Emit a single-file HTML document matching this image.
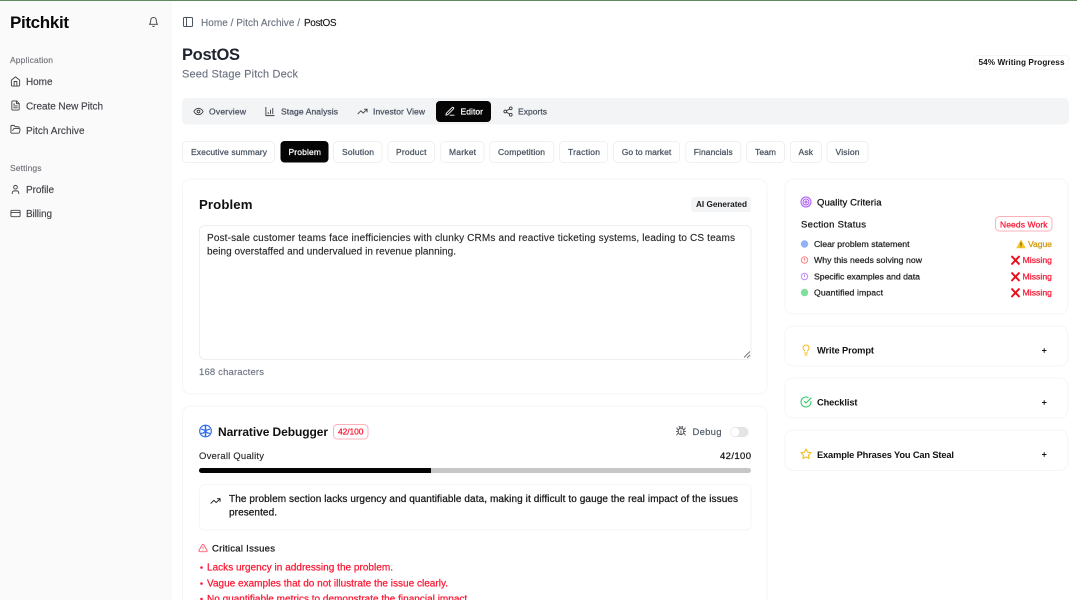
<!DOCTYPE html>
<html lang="en">
<head>
<meta charset="utf-8">
<title>PostOS - Pitchkit</title>
<style>
html,body{margin:0;padding:0;background:#fff;width:1077px;height:600px;overflow:hidden}
svg.page{display:block;filter:blur(.28px)}
text{font-family:"Liberation Sans",sans-serif;white-space:pre;fill:currentColor;stroke:currentColor;stroke-width:.13}
text.m{stroke-width:.26}
text.b{font-weight:700;stroke-width:0}
.i{fill:none;stroke-linecap:round;stroke-linejoin:round;stroke-width:2}
</style>
</head>
<body>
<svg class="page" xmlns="http://www.w3.org/2000/svg" width="1077" height="600" viewBox="0 0 1077 600">
<rect width="1077" height="600" fill="#fff"/>
<!-- sidebar -->
<rect x="0" y="0" width="172" height="600" fill="#fafafa"/>
<rect x="0" y="0" width="1077" height="1" fill="#5b8b5f"/>
<text x="10" y="28" font-size="17" class="b" color="#09090b" textLength="59">Pitchkit</text>
<svg x="148" y="16" width="11" height="12" viewBox="0 0 24 24" class="i" stroke="#3f3f46"><path d="M6 8a6 6 0 0 1 12 0c0 7 3 9 3 9H3s3-2 3-9"/><path d="M10.300 21a1.940 1.940 0 0 0 3.400 0"/></svg>

<text x="10" y="63" font-size="8.500" color="#71717a" textLength="43">Application</text>
<svg x="10" y="76" width="11" height="11" viewBox="0 0 24 24" class="i" stroke="#3f3f46"><path d="m3 9 9-7 9 7v11a2 2 0 0 1-2 2H5a2 2 0 0 1-2-2z"/><path d="M9 22V12h6v10"/></svg>
<text x="26" y="85" font-size="10" color="#3f3f46" textLength="26.500">Home</text>
<svg x="10" y="100" width="11" height="11" viewBox="0 0 24 24" class="i" stroke="#3f3f46"><path d="M14.500 2H6a2 2 0 0 0-2 2v16a2 2 0 0 0 2 2h12a2 2 0 0 0 2-2V7.500L14.500 2z"/><path d="M14 2v6h6"/><path d="M16 13H8"/><path d="M16 17H8"/><path d="M10 9H8"/></svg>
<text x="26" y="109.500" font-size="10" color="#3f3f46" textLength="77">Create New Pitch</text>
<svg x="10" y="124" width="11" height="11" viewBox="0 0 24 24" class="i" stroke="#3f3f46"><path d="m6 14 1.450-2.900A2 2 0 0 1 9.240 10H20a2 2 0 0 1 1.940 2.500l-1.550 6a2 2 0 0 1-1.940 1.500H4a2 2 0 0 1-2-2V5c0-1.100.9-2 2-2h3.930a2 2 0 0 1 1.660.9l.82 1.200a2 2 0 0 0 1.660.9H18a2 2 0 0 1 2 2v2"/></svg>
<text x="26" y="134" font-size="10" color="#3f3f46" textLength="58.500">Pitch Archive</text>

<text x="10" y="171" font-size="8.500" color="#71717a" textLength="31.500">Settings</text>
<svg x="10" y="184" width="11" height="11" viewBox="0 0 24 24" class="i" stroke="#3f3f46"><path d="M19 21v-2a4 4 0 0 0-4-4H9a4 4 0 0 0-4 4v2"/><circle cx="12" cy="7" r="4"/></svg>
<text x="26" y="193" font-size="10" color="#3f3f46" textLength="28">Profile</text>
<svg x="10" y="208" width="11" height="11" viewBox="0 0 24 24" class="i" stroke="#3f3f46"><rect x="2" y="5" width="20" height="14" rx="2"/><line x1="2" y1="10" x2="22" y2="10"/></svg>
<text x="26" y="217" font-size="10" color="#3f3f46" textLength="26">Billing</text>

<!-- breadcrumb -->
<svg x="182" y="16" width="12" height="12" viewBox="0 0 24 24" class="i" stroke="#4b5563"><rect x="3" y="3" width="18" height="18" rx="2"/><path d="M9 3v18"/></svg>
<text x="201" y="26" font-size="10" color="#6b7280" textLength="99">Home / Pitch Archive /</text>
<text x="304" y="26" font-size="10" color="#18181b" textLength="32.500">PostOS</text>

<!-- heading -->
<text x="182" y="60" font-size="16.500" class="b" color="#1f2430" textLength="58">PostOS</text>
<text x="182" y="77.500" font-size="11" color="#6b7280" textLength="116">Seed Stage Pitch Deck</text>
<rect x="974.500" y="55.500" width="94" height="14" rx="3" fill="#fff" stroke="#f7f7f7"/>
<text x="978.500" y="65" font-size="8.200" class="b" color="#18181b" textLength="86">54% Writing Progress</text>

<!-- tabs -->
<rect x="182" y="98" width="887" height="26.500" rx="5" fill="#f3f4f6"/>
<svg x="193" y="106" width="11" height="11" viewBox="0 0 24 24" class="i" stroke="#3f3f46"><path d="M2 12s3-7 10-7 10 7 10 7-3 7-10 7-10-7-10-7Z"/><circle cx="12" cy="12" r="3"/></svg>
<text x="209" y="114.500" font-size="8.500" class="m" color="#4b5563" textLength="37">Overview</text>
<svg x="264.500" y="106" width="11" height="11" viewBox="0 0 24 24" class="i" stroke="#3f3f46"><path d="M3 3v18h18"/><path d="M8 17v-3"/><path d="M13 17V9"/><path d="M18 17V5"/></svg>
<text x="281" y="114.500" font-size="8.500" class="m" color="#4b5563" textLength="57">Stage Analysis</text>
<svg x="357" y="106" width="11" height="11" viewBox="0 0 24 24" class="i" stroke="#3f3f46"><path d="m22 7-8.500 8.500-5-5L2 17"/><path d="M16 7h6v6"/></svg>
<text x="373" y="114.500" font-size="8.500" class="m" color="#4b5563" textLength="52">Investor View</text>
<rect x="436" y="101" width="55" height="21" rx="4" fill="#050505"/>
<svg x="444.500" y="106" width="11" height="11" viewBox="0 0 24 24" class="i" stroke="#fff"><path d="M12 20h9"/><path d="M16.500 3.500a2.120 2.120 0 0 1 3 3L7 19l-4 1 1-4Z"/></svg>
<text x="460.500" y="114.500" font-size="8.500" class="m" color="#fff" textLength="22.500">Editor</text>
<svg x="502.500" y="106" width="11" height="11" viewBox="0 0 24 24" class="i" stroke="#3f3f46"><circle cx="18" cy="5" r="3"/><circle cx="6" cy="12" r="3"/><circle cx="18" cy="19" r="3"/><path d="M8.590 13.510l6.830 3.980"/><path d="M15.410 6.510l-6.820 3.980"/></svg>
<text x="518" y="114.500" font-size="8.500" class="m" color="#4b5563" textLength="29">Exports</text>

<!-- section pills -->
<g fill="#fff" stroke="#f0f0f1">
<rect x="182.500" y="141.500" width="92" height="21" rx="4"/>
<rect x="333.500" y="141.500" width="48.500" height="21" rx="4"/>
<rect x="388" y="141.500" width="46.500" height="21" rx="4"/>
<rect x="440.700" y="141.500" width="43.300" height="21" rx="4"/>
<rect x="489.700" y="141.500" width="64" height="21" rx="4"/>
<rect x="559.500" y="141.500" width="48" height="21" rx="4"/>
<rect x="613.500" y="141.500" width="66" height="21" rx="4"/>
<rect x="685.800" y="141.500" width="55" height="21" rx="4"/>
<rect x="746.500" y="141.500" width="38" height="21" rx="4"/>
<rect x="790.500" y="141.500" width="31" height="21" rx="4"/>
<rect x="827" y="141.500" width="41" height="21" rx="4"/>
</g>
<rect x="280.500" y="141" width="48" height="21.500" rx="4" fill="#050505"/>
<g font-size="8.500" color="#4b5563">
<text class="m" x="191" y="155" textLength="76">Executive summary</text>
<text class="m" x="342" y="155" textLength="32">Solution</text>
<text class="m" x="396" y="155" textLength="30.500">Product</text>
<text class="m" x="449" y="155" textLength="27">Market</text>
<text class="m" x="498" y="155" textLength="47">Competition</text>
<text class="m" x="568" y="155" textLength="32">Traction</text>
<text class="m" x="621.700" y="155" textLength="49.500">Go to market</text>
<text class="m" x="693.700" y="155" textLength="39">Financials</text>
<text class="m" x="755" y="155" textLength="21">Team</text>
<text class="m" x="798.500" y="155" textLength="14.500">Ask</text>
<text class="m" x="835.500" y="155" textLength="24">Vision</text>
</g>
<text x="288.500" y="155" font-size="8.500" class="m" color="#fff" textLength="32.500">Problem</text>

<!-- problem card -->
<rect x="182.500" y="179" width="584.500" height="215" rx="8" fill="#fff" stroke="#f6f6f7"/>
<text x="199" y="209" font-size="13.200" class="b" color="#111" textLength="53.500">Problem</text>
<rect x="691" y="197" width="60" height="15" rx="3" fill="#f3f4f6"/>
<text x="696" y="207" font-size="8.200" class="b" color="#18181b" textLength="51">AI Generated</text>
<rect x="199.500" y="225.500" width="551.500" height="134" rx="5" fill="#fff" stroke="#efeff0"/>
<text x="207" y="241" font-size="10" color="#27272a" textLength="528">Post-sale customer teams face inefficiencies with clunky CRMs and reactive ticketing systems, leading to CS teams</text>
<text x="207" y="254.500" font-size="10" color="#27272a" textLength="249">being overstaffed and undervalued in revenue planning.</text>
<path d="M744 357.500l6-6M747 358l3-3" stroke="#71717a" stroke-width=".9" fill="none"/>
<text x="199" y="375" font-size="9.500" color="#6b7280" textLength="65">168 characters</text>

<!-- debugger card -->
<rect x="182.500" y="406" width="584.500" height="210" rx="8" fill="#fff" stroke="#f6f6f7"/>
<svg x="198.500" y="424" width="14" height="14" viewBox="0 0 24 24" class="i" stroke="#2f6bed"><circle cx="12" cy="12" r="10"/><path d="M12 3v18" stroke-width="2.600"/><path d="M5 9c2 0 4 1 7 3 3-2 5-3 7-3"/><path d="M5 16c3 0 5-1 7-4 2 3 4 4 7 4"/></svg>
<text x="218" y="436" font-size="12" class="b" color="#111" textLength="110">Narrative Debugger</text>
<rect x="333.500" y="424.500" width="34.500" height="14.500" rx="4" fill="#fff" stroke="#fcb0b8"/>
<text x="338" y="434.500" font-size="8.500" class="m" color="#fb1a36" textLength="25.500">42/100</text>
<svg x="675.500" y="425.500" width="11" height="11" viewBox="0 0 24 24" class="i" stroke="#52525b"><path d="m8 2 1.880 1.880"/><path d="M14.120 3.880 16 2"/><path d="M9 7.130v-1a3 3 0 1 1 6 0v1"/><path d="M12 20c-3.300 0-6-2.700-6-6v-3a4 4 0 0 1 4-4h4a4 4 0 0 1 4 4v3c0 3.300-2.700 6-6 6"/><path d="M12 20v-9"/><path d="M6.530 9C4.600 8.800 3 7.100 3 5"/><path d="M6 13H2"/><path d="M3 21c0-2.100 1.700-3.900 3.800-4"/><path d="M20.970 5c0 2.100-1.600 3.800-3.500 4"/><path d="M22 13h-4"/><path d="M17.200 17c2.100.1 3.800 1.900 3.800 4"/></svg>
<text x="692.500" y="435" font-size="9.500" color="#4b5563" textLength="29">Debug</text>
<rect x="730" y="427" width="18.500" height="10" rx="5" fill="#e4e4e7"/>
<circle cx="735" cy="432" r="4.300" fill="#fff"/>
<text x="199" y="459" font-size="9.500" color="#27272a" textLength="65">Overall Quality</text>
<text x="720" y="459" font-size="9.500" class="m" color="#18181b" textLength="31">42/100</text>
<rect x="199" y="468" width="552" height="5" rx="2.500" fill="#c6c6c6"/>
<path d="M201.500 468H431v5H201.500a2.500 2.500 0 0 1 0-5z" fill="#050505"/>
<rect x="199.500" y="484.500" width="551.500" height="45.500" rx="5" fill="#fff" stroke="#f6f6f7"/>
<svg x="210" y="495.500" width="11" height="11" viewBox="0 0 24 24" class="i" stroke="#18181b"><path d="m22 7-8.500 8.500-5-5L2 17"/><path d="M16 7h6v6"/></svg>
<text x="229" y="502" font-size="10" class="m" color="#18181b" textLength="509">The problem section lacks urgency and quantifiable data, making it difficult to gauge the real impact of the issues</text>
<text x="229" y="515.500" font-size="10" class="m" color="#18181b" textLength="48">presented.</text>
<svg x="198" y="543" width="10" height="10" viewBox="0 0 24 24" class="i" stroke="#fb4a5e"><path d="m21.730 18-8-14a2 2 0 0 0-3.480 0l-8 14A2 2 0 0 0 4 21h16a2 2 0 0 0 1.730-3Z"/><path d="M12 9v4"/><path d="M12 17h.01"/></svg>
<text x="212" y="551.500" font-size="9.500" class="m" color="#18181b" textLength="63">Critical Issues</text>
<g fill="#fb1a36">
<circle cx="201.500" cy="567.500" r="1.300"/><circle cx="201.500" cy="583.500" r="1.300"/><circle cx="201.500" cy="599" r="1.300"/>
</g>
<g font-size="10" color="#fb1a36">
<text class="m" x="207" y="570.500" textLength="186">Lacks urgency in addressing the problem.</text>
<text class="m" x="207" y="586.500" textLength="241">Vague examples that do not illustrate the issue clearly.</text>
<text class="m" x="207" y="602" textLength="263">No quantifiable metrics to demonstrate the financial impact.</text>
</g>

<!-- quality criteria -->
<rect x="785" y="179" width="283" height="135" rx="8" fill="#fff" stroke="#f6f6f7"/>
<svg x="800" y="196" width="12" height="12" viewBox="0 0 24 24" class="i" stroke="#a855f7"><circle cx="12" cy="12" r="10"/><circle cx="12" cy="12" r="6"/><circle cx="12" cy="12" r="2"/></svg>
<text x="817" y="205.500" font-size="9.500" class="m" color="#111" textLength="64.500">Quality Criteria</text>
<text x="801" y="227.500" font-size="9.500" class="m" color="#18181b" textLength="65">Section Status</text>
<rect x="995.500" y="216.500" width="56.500" height="14.500" rx="4" fill="#fff" stroke="#fcb0b8"/>
<text x="1000" y="227.500" font-size="8.500" class="m" color="#fb1a36" textLength="47.500">Needs Work</text>
<circle cx="804.500" cy="244" r="3.700" fill="#8fb2f6"/>
<circle cx="804.500" cy="260" r="3.200" fill="#fff1f1" stroke="#f98a8a" stroke-width="1"/><path d="M804.500 258.300v2" stroke="#f77"/>
<circle cx="804.500" cy="276.500" r="3.200" fill="#faf5ff" stroke="#c08ff8" stroke-width="1"/><path d="M804.500 274.800v2" stroke="#b77cf6"/>
<circle cx="804.500" cy="292.500" r="3.700" fill="#7fdf9d"/>
<g font-size="8.700" color="#27272a">
<text class="m" x="814" y="247" textLength="95.500">Clear problem statement</text>
<text class="m" x="814" y="263" textLength="108">Why this needs solving now</text>
<text class="m" x="814" y="279.500" textLength="106">Specific examples and data</text>
<text class="m" x="814" y="295.500" textLength="69">Quantified impact</text>
</g>
<path d="M1021 240l4.300 8h-8.600z" fill="#f7c325" stroke="#f7c325" stroke-linejoin="round" stroke-width=".6"/>
<path d="M1021 242.500v3M1021 246.500v.8" stroke="#3a3000" stroke-width=".9"/>
<text x="1028" y="247" font-size="8.700" class="m" color="#d29a10" textLength="24">Vague</text>
<g stroke="#e8101c" stroke-width="2" fill="none">
<path d="M1011.500 256l8 8.500M1019.500 256l-8 8.500"/>
<path d="M1011.500 272.500l8 8.500M1019.500 272.500l-8 8.500"/>
<path d="M1011.500 288.500l8 8.500M1019.500 288.500l-8 8.500"/>
</g>
<g font-size="8.700" color="#fb1a36">
<text class="m" x="1022.500" y="263" textLength="29.500">Missing</text>
<text class="m" x="1022.500" y="279.500" textLength="29.500">Missing</text>
<text class="m" x="1022.500" y="295.500" textLength="29.500">Missing</text>
</g>

<!-- accordions -->
<rect x="785" y="326" width="283" height="40" rx="8" fill="#fff" stroke="#f6f6f7"/>
<rect x="785" y="378" width="283" height="40" rx="8" fill="#fff" stroke="#f6f6f7"/>
<rect x="785" y="430" width="283" height="40.500" rx="8" fill="#fff" stroke="#f6f6f7"/>
<svg x="800" y="344" width="12" height="12" viewBox="0 0 24 24" class="i" stroke="#f5b70f"><path d="M15 14c.2-1 .7-1.700 1.500-2.500 1-.9 1.500-2.200 1.500-3.500A6 6 0 0 0 6 8c0 1 .2 2.200 1.500 3.500.7.7 1.300 1.500 1.500 2.500"/><path d="M9 18h6"/><path d="M10 22h4"/></svg>
<text x="817" y="353.500" font-size="9.300" class="b" color="#111" textLength="57">Write Prompt</text>
<svg x="800" y="396" width="12" height="12" viewBox="0 0 24 24" class="i" stroke="#22c55e"><path d="M22 11.080V12a10 10 0 1 1-5.930-9.140"/><path d="m9 11 3 3L22 4"/></svg>
<text x="817" y="405.500" font-size="9.300" class="b" color="#111" textLength="40.500">Checklist</text>
<svg x="800" y="448" width="12" height="12" viewBox="0 0 24 24" class="i" stroke="#f5b70f"><path d="M12 2 15.090 8.260 22 9.270 17 14.140 18.180 21.020 12 17.770 5.820 21.020 7 14.140 2 9.270 8.910 8.260 12 2"/></svg>
<text x="817" y="458" font-size="9.300" class="b" color="#111" textLength="137">Example Phrases You Can Steal</text>
<g stroke="#18181b" stroke-width="1" fill="none">
<path d="M1042 350.500h4.500M1044.200 348.300v4.500"/>
<path d="M1042 402.500h4.500M1044.200 400.300v4.500"/>
<path d="M1042 454.500h4.500M1044.200 452.300v4.500"/>
</g>
</svg>
</body>
</html>
